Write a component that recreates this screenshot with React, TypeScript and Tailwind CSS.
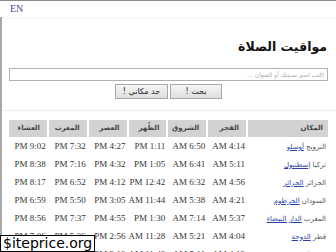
import React from "react";

const rows: { country: string; city: string; t: string[] }[] = [
  { country: "النرويج", city: "أوسلو", t: ["4:14 AM", "6:50 AM", "1:11 PM", "4:27 PM", "7:32 PM", "9:02 PM"] },
  { country: "تركيا", city: "إسطنبول", t: ["5:11 AM", "6:41 AM", "1:05 PM", "4:32 PM", "7:16 PM", "8:38 PM"] },
  { country: "الجزائر", city: "الجزائر", t: ["4:56 AM", "6:32 AM", "12:42 PM", "4:12 PM", "6:52 PM", "8:17 PM"] },
  { country: "السودان", city: "الخرطوم", t: ["4:21 AM", "5:38 AM", "11:44 AM", "3:05 PM", "5:50 PM", "6:59 PM"] },
  { country: "المغرب", city: "الدار البيضاء", t: ["5:37 AM", "7:14 AM", "1:30 PM", "4:55 PM", "7:37 PM", "8:56 PM"] },
  { country: "قطر", city: "الدوحة", t: ["4:04 AM", "5:21 AM", "11:28 AM", "2:56 PM", "5:36 PM", "7:06 PM"] },
  { country: "مصر", city: "القاهرة", t: ["4:13 AM", "5:11 AM", "11:49 AM", "3:19 PM", "6:58 PM", "8:28 PM"] },
];

const heads = ["المكان", "الفجر", "الشروق", "الظُهر", "العصر", "المغرب", "العشاء"];

export default function App() {
  return (
    <div className="relative w-[336px] h-[252px] overflow-hidden bg-white">
      <div className="h-[17px] border-t border-[#8c8c8c] flex items-center px-[10px] shadow-[0_1px_2px_rgba(0,0,0,0.06)]">
        <a className="text-[10px] leading-none text-[#4f45a8] [font-family:'Liberation_Serif',serif]">EN</a>
      </div>
      <div dir="rtl" className="border-l-2 border-[#a8a8a8] h-[235px] pl-[7px] pr-[8px] [font-family:'DejaVu_Sans',sans-serif]">
        <h1 className="pt-[20px] text-[12.5px] leading-[20px] font-bold text-[#111] pr-[1px]">مواقيت الصلاة</h1>
        <div className="mt-[11px] h-[13px] border border-[#b0b0b0] bg-white flex items-center pr-[3px]">
          <span className="text-[6px] text-[#aaa] leading-none">اكتب اسم مدينتك أو العنوان ...</span>
        </div>
        <div className="mt-[3px] flex justify-center gap-[2px]">
          <button className="w-[52px] h-[15px] border border-[#a9a9a9] bg-gradient-to-b from-[#f6f6f6] to-[#dedede] text-[8px] leading-none text-[#222]">بحث !</button>
          <button className="w-[53px] h-[15px] border border-[#a9a9a9] bg-gradient-to-b from-[#f6f6f6] to-[#dedede] text-[8px] leading-none text-[#222]">جد مكاني !</button>
        </div>
        <div className="mt-[11px] -ml-[7px] -mr-[8px] border-t border-[#ececec]" />
        <table className="mt-[7px] w-[323px] -mr-[2px] border-separate border-spacing-[2px] table-fixed">
          <colgroup>
            <col className="w-[80px]" />
            <col />
            <col />
            <col />
            <col />
            <col />
            <col />
          </colgroup>
          <thead>
            <tr>
              {heads.map((h, i) => (
                <th
                  key={h}
                  className={`h-[17px] bg-[#d2d2d2] text-right text-[7px] font-bold text-[#444] ${i === 0 ? "pr-[5px]" : "pr-[7px]"}`}
                >
                  {h}
                </th>
              ))}
            </tr>
          </thead>
          <tbody>
            {rows.map((r) => (
              <tr key={r.city}>
                <td className="h-[16px] text-right pr-[2px] text-[7px] whitespace-nowrap text-[#555]">
                  {r.country} <a className="text-[#2b3fa8] underline">{r.city}</a>
                </td>
                {r.t.map((v, j) => (
                  <td key={j} className="h-[16px] text-right pr-[1px] text-[9px] whitespace-nowrap text-[#333] [font-family:'Liberation_Serif',serif]">
                    {v}
                  </td>
                ))}
              </tr>
            ))}
          </tbody>
        </table>
      </div>
      <div className="absolute left-0 bottom-0 bg-white border border-black px-[2px] text-[14px] leading-[15px] text-black [font-family:'DejaVu_Sans',sans-serif]">
        $iteprice.org
      </div>
    </div>
  );
}
